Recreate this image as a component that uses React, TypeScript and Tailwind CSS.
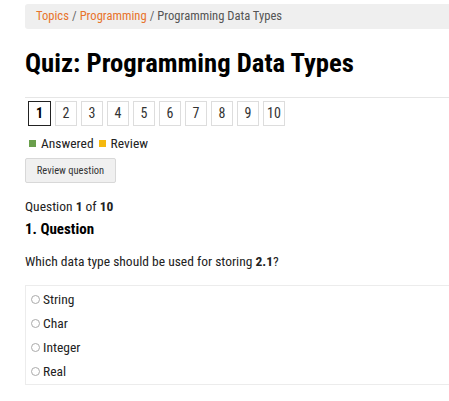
const pages = [1, 2, 3, 4, 5, 6, 7, 8, 9, 10];
const options = ["String", "Char", "Integer", "Real"];

export default function App() {
  return (
    <div className="min-h-[401px] bg-white pl-[25px] pt-[4px] font-['Roboto_Condensed','Liberation_Sans_Narrow',Roboto,sans-serif] text-[#222]">
      <nav className="flex h-[25px] items-center rounded-l-[3px] bg-[#efefef] pl-[11px] text-[12.6px]">
        <span className="text-[#e8732c]">Topics</span>
        <span className="px-[3px] text-[#666]">/</span>
        <span className="text-[#e8732c]">Programming</span>
        <span className="px-[3px] text-[#666]">/</span>
        <span className="text-[#555]">Programming Data Types</span>
      </nav>

      <h1 className="mt-[17px] text-[26.7px] font-bold leading-[34px] text-black">Quiz: Programming Data Types</h1>

      <div className="mt-[17px] border-t border-[#e6e6e6] pt-[3px]">
        <div className="flex gap-[4px] pl-[3px]">
          {pages.map((n) => (
            <div
              key={n}
              className={
                n === 1
                  ? "flex h-[25px] w-[23px] items-center justify-center border border-[#222] text-[14px] font-bold text-black"
                  : "flex h-[25px] w-[22px] items-center justify-center border border-[#ddd] text-[14px] text-[#333]"
              }
            >
              {n}
            </div>
          ))}
        </div>
      </div>

      <div className="mt-[8px] flex items-center pl-[4px] text-[13.5px] leading-[18px]">
        <span className="mr-[5px] inline-block h-[7px] w-[7px] bg-[#6a9f4c]" />
        <span>Answered</span>
        <span className="ml-[5px] mr-[5px] inline-block h-[7px] w-[7px] bg-[#f5b90f]" />
        <span>Review</span>
      </div>

      <button className="mt-[6px] h-[25px] w-[91px] rounded-[2px] border border-[#d8d8d8] bg-[#f0f0f0] text-[10.5px] text-[#333]">
        Review question
      </button>

      <p className="mt-[13px] text-[13.5px] leading-[20px]">
        Question <b>1</b> of <b>10</b>
      </p>
      <h3 className="mt-[3px] text-[15px] font-bold leading-[20px] text-black">1. Question</h3>
      <p className="mt-[12px] text-[13.5px] leading-[20px]">
        Which data type should be used for storing <b>2.1</b>?
      </p>

      <ul className="mt-[14px] border-y border-l border-[#ececec] py-[1px] pl-[5px]">
        {options.map((o) => (
          <li key={o} className="flex h-[24px] items-center text-[13.5px]">
            <span className="mr-[3px] inline-block h-[9px] w-[9px] rounded-full border border-[#aaa]" />
            {o}
          </li>
        ))}
      </ul>
    </div>
  );
}
